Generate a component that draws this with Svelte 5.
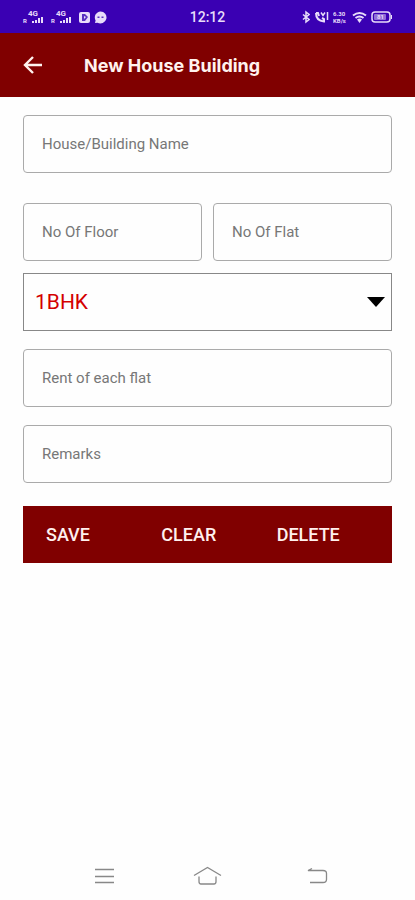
<script lang="ts">
	let name = '';
	let floors = '';
	let flats = '';
	let flatType = '1BHK';
	let rent = '';
	let remarks = '';

	const flatTypes = ['1BHK', '2BHK', '3BHK'];

	function clearForm() {
		name = '';
		floors = '';
		flats = '';
		flatType = flatTypes[0];
		rent = '';
		remarks = '';
	}
</script>

<div class="screen">
	<div class="status-bar">
		<div class="status-group">
			{#each [1, 2] as sim (sim)}
				<svg width="24" height="18" viewBox="0 0 24 18" aria-hidden="true">
					<text x="6" y="8" class="tiny large">4G</text>
					<text x="1" y="15" class="tiny">R</text>
					<path d="M10 13h2v2h-2zM13 12h2v3h-2zM16 10h2v5h-2zM19 9h2v6h-2z" />
				</svg>
			{/each}
			<svg class="app-icon" width="11" height="18" viewBox="0 0 11 18" aria-hidden="true">
				<rect x="0" y="4" width="11" height="11" rx="2" />
				<path class="cut" d="M3 6h3l3 3-3 4H3z" />
				<path d="M5 8l2 1-2 2z" />
			</svg>
			<svg width="13" height="18" viewBox="0 0 13 18" aria-hidden="true">
				<path d="M6.5 3.5a6 6 0 1 1-3 11.2L1 15l.6-2.5A6 6 0 0 1 6.5 3.5z" />
				<path class="cut" d="M3.5 8.500h2v1.500h-2zM7.500 8.500h2v1.500h-2z" />
			</svg>
		</div>
		<time>12:12</time>
		<div class="status-group right">
			<svg width="8" height="18" viewBox="0 0 8 18" aria-hidden="true">
				<path class="line bold" d="M1 6.500l6 5-3 2.500V4l3 2.500-6 5" />
			</svg>
			<svg width="15" height="18" viewBox="0 0 15 18" aria-hidden="true">
				<path class="line thick" d="M2 5c0 5 3 8 8 8.500V11L8 10M2 5h2l1 3" />
				<path class="line bold" d="M7 4.500l2 3 2-3M13.500 4v8" />
			</svg>
			<svg width="15" height="18" viewBox="0 0 15 18" aria-hidden="true">
				<text x="0" y="8" class="tiny">6.30</text>
				<text x="0" y="15" class="tiny">KB/s</text>
			</svg>
			<svg width="15" height="18" viewBox="0 0 15 18" aria-hidden="true">
				<path class="line thick" d="M1 7.500q6.500-5 13 0M3.500 10q4-3 8 0" />
				<path d="M5 11.500q2.500-2 5 0L7.500 15z" />
			</svg>
			<svg width="22" height="18" viewBox="0 0 22 18" aria-hidden="true">
				<rect class="line bold" x="1" y="4" width="18" height="10" rx="3" />
				<rect x="3" y="6" width="12" height="6" rx="1" opacity="0.5" />
				<text x="6" y="11" class="tiny">81</text>
				<path d="M20 7h1v4h-1z" />
			</svg>
		</div>
	</div>

	<header>
		<button type="button" class="back-btn" aria-label="Back">
			<svg width="20" height="20" viewBox="0 0 20 20" aria-hidden="true">
				<path d="M19 10H2M10 2L2 10l8 8" />
			</svg>
		</button>
		<h1>New House Building</h1>
	</header>

	<form on:submit|preventDefault>
		<input class="field name" aria-label="House/Building Name" placeholder="House/Building Name" bind:value={name} />
		<div class="row">
			<input class="field" aria-label="No Of Floor" placeholder="No Of Floor" inputmode="numeric" bind:value={floors} />
			<input class="field" aria-label="No Of Flat" placeholder="No Of Flat" inputmode="numeric" bind:value={flats} />
		</div>
		<div class="select-wrap">
			<select aria-label="Flat type" bind:value={flatType}>
				{#each flatTypes as type}
					<option value={type}>{type}</option>
				{/each}
			</select>
			<svg class="caret" width="18" height="10" viewBox="0 0 18 10" aria-hidden="true">
				<path d="M0 0h18L9 10z" />
			</svg>
		</div>
		<input class="field" aria-label="Rent of each flat" placeholder="Rent of each flat" inputmode="decimal" bind:value={rent} />
		<input class="field" aria-label="Remarks" placeholder="Remarks" bind:value={remarks} />

		<div class="actions">
			<button type="submit">SAVE</button>
			<button type="button" on:click={clearForm}>CLEAR</button>
			<button type="button">DELETE</button>
		</div>
	</form>

	<nav>
		<button type="button" aria-label="Recent apps">
			<svg width="40" height="24" viewBox="0 0 40 24" aria-hidden="true">
				<path d="M11 5.500h19M11 12.500h19M11 18.500h19" />
			</svg>
		</button>
		<button type="button" aria-label="Home">
			<svg width="40" height="24" viewBox="0 0 40 24" aria-hidden="true">
				<path d="M7 11.500L20.500 3.500l13.500 8M12 12.500v5q0 2.500 2 2.500h13q2 0 2-2.500v-5" />
			</svg>
		</button>
		<button type="button" aria-label="Back">
			<svg width="40" height="24" viewBox="0 0 40 24" aria-hidden="true">
				<path d="M19 18.500h13q3.500 0 3.500-3v-6q0-3-3.500-3H17l4-2" />
			</svg>
		</button>
	</nav>
</div>

<style>
	:global(body) {
		margin: 0;
		background: #fefefe;
	}

	.screen {
		min-height: 100vh;
		display: flex;
		flex-direction: column;
		font-family: Roboto, "Liberation Sans", sans-serif;
	}

	button {
		border: none;
		background: none;
		padding: 0;
		font: inherit;
		color: inherit;
		cursor: pointer;
	}

	svg {
		display: block;
	}

	.status-bar {
		display: grid;
		grid-template-columns: 1fr auto 1fr;
		align-items: center;
		height: 33px;
		padding: 0 22px;
		background: #3a00b3;
		color: #e8dcfa;
		box-sizing: border-box;
	}

	.status-bar time {
		font-size: 14px;
		font-weight: 500;
	}

	.status-group {
		display: flex;
		gap: 4px;
	}

	.status-group.right {
		justify-content: flex-end;
	}

	.status-bar svg {
		fill: #e8dcfa;
	}

	.app-icon {
		margin-left: 1px;
	}

	.tiny {
		font-size: 6px;
		font-weight: 700;
	}

	.large {
		font-size: 8px;
	}

	.status-bar .cut {
		fill: #5a30c0;
	}

	.status-bar .line {
		fill: none;
		stroke: #e8dcfa;
	}

	.status-bar .bold {
		stroke-width: 1.5;
	}

	.status-bar .thick {
		stroke-width: 2;
	}

	header {
		display: flex;
		align-items: center;
		gap: 41px;
		height: 64px;
		padding: 0 23px;
		background: #800000;
		color: #fff2ee;
	}

	.back-btn svg {
		fill: none;
		stroke: #fff2ee;
		stroke-width: 2.4;
	}

	h1 {
		margin: 0;
		font-family: Inter, "Open Sans", sans-serif;
		font-size: 18px;
		font-weight: 700;
	}

	form {
		flex: 1;
		display: flex;
		flex-direction: column;
		gap: 18px;
		padding: 18px 23px;
	}

	.field,
	select {
		width: 100%;
		min-width: 0;
		height: 58px;
		box-sizing: border-box;
		border: 1px solid #aaa;
		background: #fefefe;
		font-family: inherit;
	}

	.field {
		padding: 0 18px;
		border-radius: 4px;
		font-size: 15px;
		color: #333;
	}

	.field::placeholder {
		color: #777;
		opacity: 1;
	}

	.name {
		margin-bottom: 12px;
	}

	.row {
		display: grid;
		grid-template-columns: 1fr 1fr;
		gap: 11px;
		margin-bottom: -6px;
	}

	.select-wrap {
		position: relative;
	}

	select {
		display: block;
		appearance: none;
		padding: 0 36px 0 11px;
		border-color: #888;
		border-radius: 0;
		font-size: 21px;
		color: #d40000;
	}

	.caret {
		position: absolute;
		right: 7px;
		top: 24px;
		pointer-events: none;
	}

	.actions {
		display: grid;
		grid-template-columns: repeat(3, 1fr);
		height: 57px;
		margin-top: 5px;
		padding-right: 23px;
		background: #800000;
		color: #fff0ee;
	}

	.actions button {
		padding-left: 23px;
		text-align: left;
		font-size: 18px;
		font-weight: 500;
	}

	nav {
		display: grid;
		grid-template-columns: repeat(3, 1fr);
		justify-items: center;
		padding: 12px 52px;
	}

	nav svg {
		fill: none;
		stroke: #888;
		stroke-width: 1.3;
	}
</style>
